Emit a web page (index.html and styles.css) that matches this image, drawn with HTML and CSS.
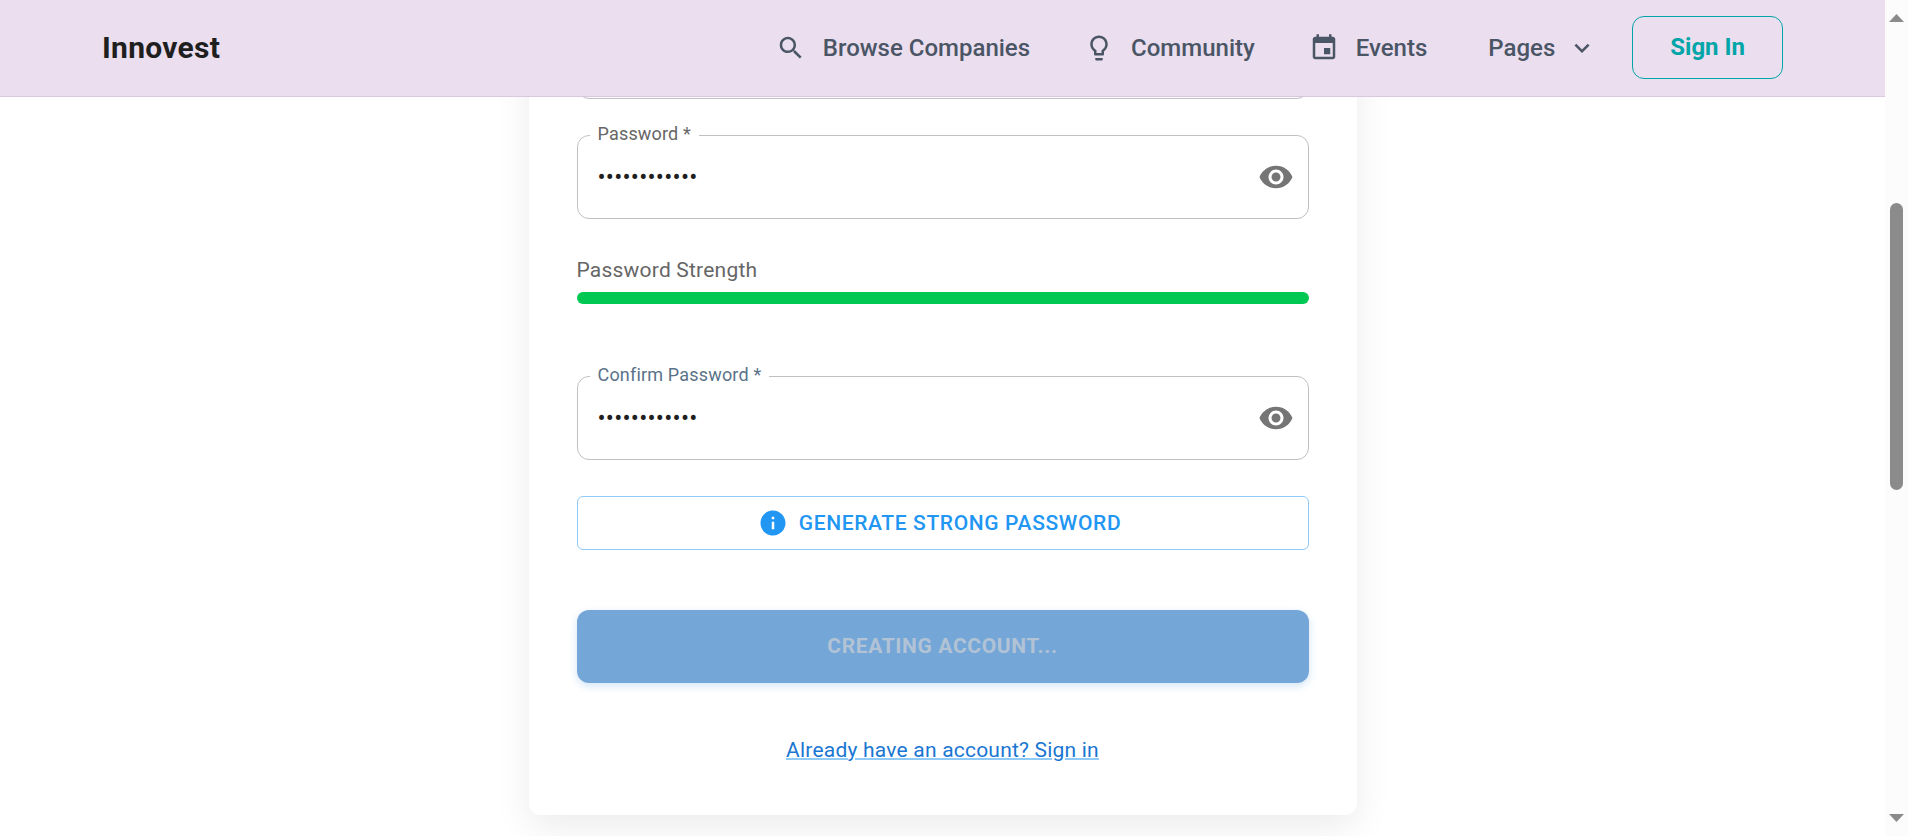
FILE: index.html
```html
<!DOCTYPE html>
<html lang="en">
<head>
  <meta charset="utf-8">
  <meta name="viewport" content="width=device-width, initial-scale=1">
  <title>Innovest</title>
  <link rel="stylesheet" href="styles.css">
</head>
<body>
  <div class="page">
    <header class="topbar">
      <a class="brand" href="#">Innovest</a>
      <nav class="nav">
        <a class="nav-link" href="#">
          <svg class="icon" viewBox="0 0 24 24" aria-hidden="true"><path d="M15.5 14h-.79l-.28-.27C15.41 12.59 16 11.11 16 9.5 16 5.91 13.09 3 9.5 3S3 5.91 3 9.5 5.91 16 9.5 16c1.61 0 3.09-.59 4.23-1.57l.27.28v.79l5 4.99L20.49 19l-4.99-5zm-6 0C7.01 14 5 11.99 5 9.5S7.01 5 9.5 5 14 7.01 14 9.5 11.99 14 9.5 14z"/></svg>
          Browse Companies
        </a>
        <a class="nav-link" href="#">
          <svg class="icon" viewBox="0 0 24 24" aria-hidden="true"><path d="M9 21c0 .55.45 1 1 1h4c.55 0 1-.45 1-1v-1H9v1zm3-19C8.14 2 5 5.14 5 9c0 2.38 1.19 4.47 3 5.74V17c0 .55.45 1 1 1h6c.55 0 1-.45 1-1v-2.26c1.81-1.27 3-3.36 3-5.74 0-3.86-3.14-7-7-7zm2.85 11.1-.85.6V16h-4v-2.3l-.85-.6C7.8 12.16 7 10.63 7 9c0-2.76 2.24-5 5-5s5 2.24 5 5c0 1.63-.8 3.16-2.15 4.1z"/></svg>
          Community
        </a>
        <a class="nav-link" href="#">
          <svg class="icon" viewBox="0 0 24 24" aria-hidden="true"><path d="M17 12h-5v5h5v-5zM16 1v2H8V1H6v2H5c-1.11 0-1.99.9-1.99 2L3 19c0 1.1.89 2 2 2h14c1.1 0 2-.9 2-2V5c0-1.1-.9-2-2-2h-1V1h-2zm3 18H5V8h14v11z"/></svg>
          Events
        </a>
        <button class="nav-link nav-menu" type="button">
          Pages
          <svg class="icon" viewBox="0 0 24 24" aria-hidden="true"><path d="M16.59 8.59 12 13.17 7.41 8.59 6 10l6 6 6-6z"/></svg>
        </button>
      </nav>
      <a class="sign-in" href="#">Sign In</a>
    </header>

    <main class="content">
      <form class="card">
        <div class="field">
          <input class="field-input" type="email" aria-label="Email">
        </div>

        <div class="field">
          <label class="field-label" for="password">Password *</label>
          <input class="field-input" id="password" type="password" value="innovest2024">
          <button class="reveal" type="button" aria-label="Show password">
            <svg class="icon-large" viewBox="0 0 24 24" aria-hidden="true"><path d="M12 4.5C7 4.5 2.73 7.61 1 12c1.73 4.39 6 7.5 11 7.5s9.27-3.11 11-7.5c-1.73-4.39-6-7.5-11-7.5zM12 17c-2.76 0-5-2.24-5-5s2.24-5 5-5 5 2.24 5 5-2.24 5-5 5zm0-8c-1.66 0-3 1.34-3 3s1.34 3 3 3 3-1.34 3-3-1.34-3-3-3z"/></svg>
          </button>
        </div>

        <div class="strength">
          <span class="strength-label" id="strength-label">Password Strength</span>
          <div class="strength-bar" role="progressbar" aria-labelledby="strength-label" aria-valuenow="100"></div>
        </div>

        <div class="field">
          <label class="field-label field-label-slate" for="confirm">Confirm Password *</label>
          <input class="field-input" id="confirm" type="password" value="innovest2024">
          <button class="reveal" type="button" aria-label="Show password">
            <svg class="icon-large" viewBox="0 0 24 24" aria-hidden="true"><path d="M12 4.5C7 4.5 2.73 7.61 1 12c1.73 4.39 6 7.5 11 7.5s9.27-3.11 11-7.5c-1.73-4.39-6-7.5-11-7.5zM12 17c-2.76 0-5-2.24-5-5s2.24-5 5-5 5 2.24 5 5-2.24 5-5 5zm0-8c-1.66 0-3 1.34-3 3s1.34 3 3 3 3-1.34 3-3-1.34-3-3-3z"/></svg>
          </button>
        </div>

        <button class="generate" type="button">
          <svg class="icon" viewBox="0 0 24 24" aria-hidden="true"><path d="M12 2C6.48 2 2 6.48 2 12s4.48 10 10 10 10-4.48 10-10S17.52 2 12 2zm1 15h-2v-6h2v6zm0-8h-2V7h2v2z"/></svg>
          Generate Strong Password
        </button>

        <button class="submit" type="submit" disabled>Creating Account...</button>

        <a class="switch" href="#">Already have an account? Sign in</a>
      </form>
    </main>
  </div>

  <div class="scrollbar" aria-hidden="true">
    <svg class="scroll-arrow" viewBox="0 0 15 8"><path d="M7.5 0 15 8H0z"/></svg>
    <div class="scroll-track"><div class="scroll-thumb"></div></div>
    <svg class="scroll-arrow" viewBox="0 0 15 8"><path d="M0 0h15L7.5 8z"/></svg>
  </div>
</body>
</html>
```

FILE: styles.css
```css
* {
  box-sizing: border-box;
}

body {
  margin: 0;
  height: 100vh;
  display: flex;
  overflow: hidden;
  background: #fff;
  color: #1f1f1f;
  font-family: Roboto, "Liberation Sans", sans-serif;
  font-size: 24px;
}

button,
input {
  font: inherit;
  color: inherit;
}

button {
  cursor: pointer;
}

.page {
  flex: 1;
  min-width: 0;
  overflow: hidden;
}

.icon {
  width: 30px;
  height: 30px;
  fill: currentColor;
}

.icon-large {
  display: block;
  width: 36px;
  height: 36px;
  fill: currentColor;
}

.topbar {
  position: sticky;
  top: 0;
  z-index: 2;
  display: flex;
  align-items: center;
  height: 97px;
  padding: 0 102px 1px;
  background: #ebdeef;
  border-bottom: 1px solid #d9c8de;
}

.brand {
  margin-right: auto;
  color: #1f1f1f;
  font-size: 30px;
  font-weight: 700;
  letter-spacing: 0.01em;
  text-decoration: none;
}

.nav {
  display: flex;
  align-items: center;
  gap: 54px;
  margin-right: 35px;
}

.nav-link {
  display: flex;
  align-items: center;
  gap: 17px;
  padding: 0;
  border: 0;
  background: none;
  color: #4a5565;
  font-weight: 500;
  text-decoration: none;
}

.nav-menu {
  gap: 12px;
  padding-left: 7px;
}

.sign-in {
  padding: 15px 37px;
  border: 1px solid #00a5a8;
  border-radius: 12px;
  color: #00a5a8;
  font-weight: 700;
  line-height: 31px;
  text-decoration: none;
}

.content {
  margin-top: -97px;
  padding: 0 24px;
}

.card {
  display: flex;
  flex-direction: column;
  max-width: 828px;
  margin: 0 auto;
  padding: 15px 48px 48px;
  border-radius: 12px;
  background: #fff;
  box-shadow: 0 12px 36px rgba(0, 0, 0, 0.08);
}

.field {
  position: relative;
  display: flex;
  align-items: center;
  height: 84px;
  margin-bottom: 36px;
  padding: 0 14px 0 20px;
  border: 1px solid #c0c0c0;
  border-radius: 12px;
}

.field-label {
  position: absolute;
  top: -14px;
  left: 12px;
  padding: 0 8px;
  background: #fff;
  color: #666;
  font-size: 18px;
  letter-spacing: 0.01em;
  line-height: 24px;
}

.field-label-slate {
  color: #5a738a;
}

.field-input {
  flex: 1;
  min-width: 0;
  padding: 0;
  border: 0;
  outline: 0;
  background: none;
  letter-spacing: 0.01em;
}

.reveal {
  padding: 0;
  border: 0;
  background: none;
  color: #757575;
}

.strength {
  margin-bottom: 72px;
}

.strength-label {
  display: block;
  margin-bottom: 6px;
  color: #666;
  font-size: 21px;
  letter-spacing: 0.01em;
  line-height: 31px;
}

.strength-bar {
  height: 12px;
  border-radius: 6px;
  background: #00c853;
}

.generate {
  display: flex;
  align-items: center;
  justify-content: center;
  gap: 11px;
  height: 54px;
  margin-bottom: 60px;
  padding: 0 12px 0 6px;
  border: 1px solid #90caf9;
  border-radius: 6px;
  background: none;
  color: #2196f3;
  font-size: 21px;
  font-weight: 500;
  letter-spacing: 0.03em;
  text-transform: uppercase;
}

.submit {
  height: 73px;
  margin-bottom: 50px;
  padding: 0 6px 2px;
  border: 0;
  border-radius: 12px;
  background: #75a6d8;
  box-shadow: 0 3px 8px rgba(25, 118, 210, 0.2);
  color: #b1c3d5;
  font-size: 21px;
  font-weight: 700;
  letter-spacing: 0.03em;
  text-transform: uppercase;
}

.switch {
  align-self: center;
  color: #1976d2;
  font-size: 21px;
  letter-spacing: 0.01em;
  line-height: 34px;
  text-decoration: underline 2px #90caf9;
}

.scrollbar {
  display: flex;
  flex-direction: column;
  align-items: center;
  width: 23px;
  padding: 14px 0;
  background: #fcfcfc;
}

.scroll-arrow {
  width: 15px;
  height: 8px;
  fill: #8b8b8b;
}

.scroll-track {
  flex: 1;
  width: 13px;
  padding: 181px 0 0;
}

.scroll-thumb {
  height: 47%;
  border-radius: 7px;
  background: #8b8b8b;
}
```
